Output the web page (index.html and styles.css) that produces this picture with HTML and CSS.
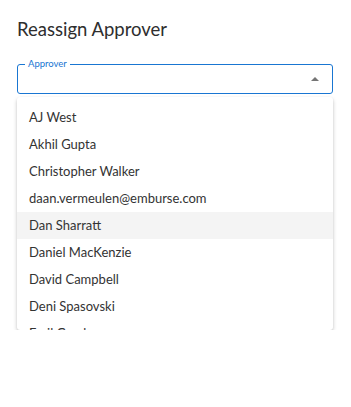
FILE: index.html
```html
<!DOCTYPE html>
<html lang="en">
<head>
    <meta charset="UTF-8">
    <title>Reassign Approver</title>
    <link rel="stylesheet" href="styles.css">
</head>
<body>
    <div class="dialog">
        <h2 class="dialog-title">Reassign Approver</h2>

        <!-- Campo de selección -->
        <div class="select-field">
            <span class="select-label">Approver</span>
            <div class="select-input">
                <span class="caret"></span>
            </div>
        </div>

        <!-- Lista desplegable -->
        <ul class="option-list">
            <li class="option">AJ West</li>
            <li class="option">Akhil Gupta</li>
            <li class="option">Christopher Walker</li>
            <li class="option">daan.vermeulen@emburse.com</li>
            <li class="option option-hover">Dan Sharratt</li>
            <li class="option">Daniel MacKenzie</li>
            <li class="option">David Campbell</li>
            <li class="option">Deni Spasovski</li>
            <li class="option">Emil Grach</li>
        </ul>
    </div>
</body>
</html>
```

FILE: styles.css
```css
/* Estilos generales */
body {
    margin: 0;
    background: #fff;
    font-family: 'Lato', 'Liberation Sans', sans-serif;
    color: #333;
}

.dialog {
    padding: 17px 18px 0 17px;
}

.dialog-title {
    margin: 0;
    font-size: 18.5px;
    font-weight: 400;
    line-height: 25px;
    color: #2e2e2e;
}

/* Campo de selección */
.select-field {
    position: relative;
    margin-top: 22px;
}

.select-input {
    height: 28px;
    border: 1px solid #1976d2;
    border-radius: 3px;
    display: flex;
    align-items: center;
    justify-content: flex-end;
    padding-right: 13px;
}

.select-label {
    position: absolute;
    top: -6px;
    left: 8px;
    padding: 0 3px;
    background: #fff;
    font-size: 9.5px;
    line-height: 11px;
    color: #1976d2;
}

.caret {
    width: 0;
    height: 0;
    border-left: 4px solid transparent;
    border-right: 4px solid transparent;
    border-bottom: 4px solid #757575;
}

/* Lista desplegable */
.option-list {
    list-style: none;
    margin: 3px 0 0 0;
    padding: 7px 0 0 0;
    height: 226px;
    overflow: hidden;
    background: #fff;
    border-radius: 3px;
    box-shadow: 0 2px 4px rgba(0, 0, 0, 0.2), 0 1px 2px rgba(0, 0, 0, 0.08);
}

.option {
    height: 27px;
    line-height: 27px;
    padding-left: 12px;
    font-size: 13px;
    color: #333;
}

.option-hover {
    background: #f4f4f4;
}
```
